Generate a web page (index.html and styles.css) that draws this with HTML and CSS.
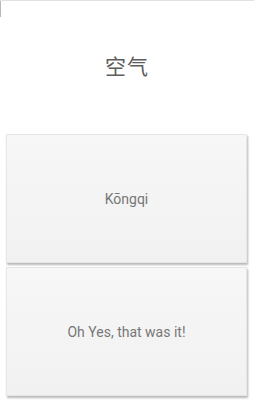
FILE: index.html
```html
<!DOCTYPE html>
<html>
<head>
<meta charset="utf-8">
<link rel="stylesheet" href="styles.css">
</head>
<body>
<div class="screen">
  <div class="edge-mark"></div>
  <header class="prompt">
    <h1 class="word">空气</h1>
  </header>
  <main class="choices">
    <div class="card"><span class="card-text">Kōngqi</span></div>
    <div class="card"><span class="card-text">Oh Yes, that was it!</span></div>
  </main>
</div>
</body>
</html>
```
FILE: styles.css
```css
html, body {
  margin: 0;
  padding: 0;
  background: #ffffff;
}
.screen {
  position: relative;
  width: 254px;
  height: 400px;
  overflow: hidden;
  border-top: 1px solid #e2e2e2;
  box-sizing: border-box;
  font-family: Roboto, "Noto Sans CJK SC", "Liberation Sans", sans-serif;
}
.edge-mark {
  position: absolute;
  left: 0;
  top: 0;
  width: 1px;
  height: 16px;
  background: #b8b8b8;
}
.prompt {
  height: 133px;
  display: flex;
  align-items: center;
  justify-content: center;
}
.word {
  margin: 0;
  font-family: "Noto Sans CJK SC", sans-serif;
  font-weight: 400;
  font-size: 21px;
  color: #5e5e5e;
  letter-spacing: 1px;
  padding-bottom: 6px;
}
.choices {
  display: flex;
  flex-direction: column;
  gap: 4px;
  padding: 0 7px 0 6px;
}
.card {
  height: 127px;
  display: flex;
  align-items: center;
  justify-content: center;
  background: linear-gradient(#f7f7f7, #f1f1f1);
  border: 1px solid #e6e6e6;
  box-shadow: 1px 2px 2px rgba(0, 0, 0, 0.28);
}
.card-text {
  font-size: 14px;
  color: #777777;
}
```
